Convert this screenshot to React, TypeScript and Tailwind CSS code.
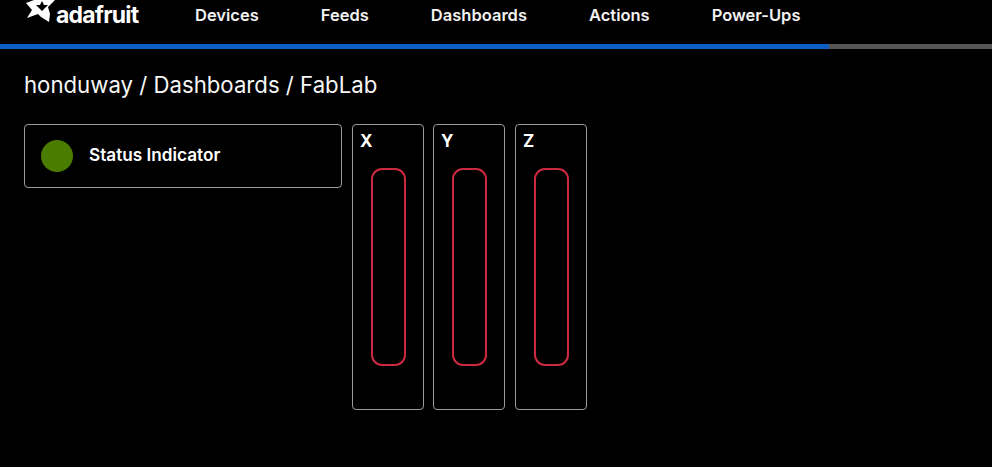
const navItems = ["Devices", "Feeds", "Dashboards", "Actions", "Power-Ups"];

function Logo() {
  return (
    <div className="flex h-[28px] w-[115px] items-end">
      <svg width="36" height="28" viewBox="0 0 36 28" className="shrink-0">
        <path
          fill="#fff"
          fillRule="evenodd"
          d="M13 -6 L18 -2 L26 -3 L34 -2 L24 8 L26 15 L25 23 L17 18 L14 15 L3 19 L8 11 L2 4 L10 1 Z M18 2 L20 6 L24 6 L21 9 L18 12 L15 9 L12 6 L16 6 Z"
        />
      </svg>
      <span className="-ml-[4px] text-[23px] leading-[23px] font-bold tracking-[-0.8px] text-white">
        adafruit
      </span>
    </div>
  );
}

function AxisCard({ label, className }: { label: string; className?: string }) {
  return (
    <div className={`flex h-[286px] w-[72px] flex-col rounded-[4px] border border-[#9a9a9a] ${className ?? ""}`}>
      <span className="ml-[7px] mt-[5px] text-[17px] leading-[22px] font-bold text-white">
        {label}
      </span>
      <div className="mx-auto mt-[16px] h-[198px] w-[35px] rounded-[11px] border-2 border-[#cc2a40]" />
    </div>
  );
}

export default function App() {
  return (
    <div className="h-[467px] overflow-hidden bg-black font-['Inter',sans-serif] text-white">
      <header className="flex h-[44px] items-end pl-[24px]">
        <div className="pb-[17px]">
          <Logo />
        </div>
        <nav className="ml-[56px] flex h-[44px] gap-[62px] pt-[4px] text-[16.500px] leading-[22px] font-semibold text-[#f2f2f2]">
          {navItems.map((item) => (
            <span key={item}>{item}</span>
          ))}
        </nav>
      </header>
      <div className="flex h-[5px] bg-[#555555]">
        <div className="w-[829px] bg-[#0d5fc4]" />
      </div>
      <main className="px-[24px]">
        <h1 className="mt-[22px] text-[22.200px] leading-[28px] font-normal text-[#f7f7f7]">
          honduway / Dashboards / FabLab
        </h1>
        <div className="mt-[25px] flex items-start">
          <div className="flex h-[64px] w-[318px] items-center gap-[16px] rounded-[4px] border border-[#9a9a9a] pl-[16px]">
            <div className="h-[32px] w-[32px] rounded-full bg-[#4a7c00]" />
            <span className="pb-[2px] text-[17.200px] font-semibold text-white">Status Indicator</span>
          </div>
          <div className="ml-[10px] flex gap-[9px]">
            <AxisCard label="X" />
            <AxisCard label="Y" />
            <AxisCard label="Z" className="ml-px" />
          </div>
        </div>
      </main>
    </div>
  );
}
